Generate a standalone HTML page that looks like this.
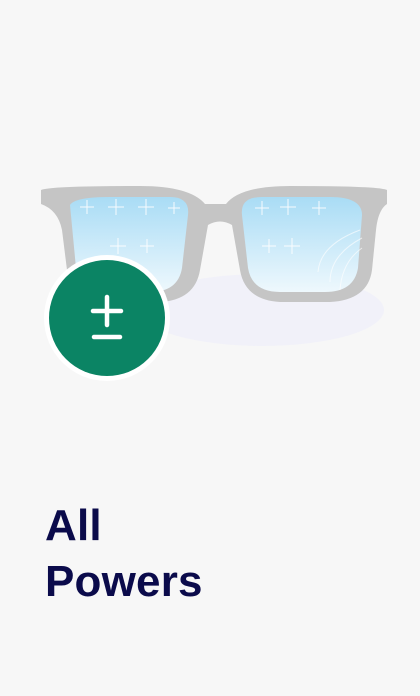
<!DOCTYPE html>
<html><head><style>
html,body{margin:0;padding:0;background:#f7f7f7;width:420px;height:696px;overflow:hidden}
.t{position:absolute;left:45px;top:498px;font:bold 44px/56px "Liberation Sans",sans-serif;color:#0b0b4b;letter-spacing:0.2px}
</style></head><body>
<svg width="420" height="696" style="position:absolute;left:0;top:0">
<defs>
<linearGradient id="lg" x1="0" y1="0" x2="0" y2="1">
<stop offset="0" stop-color="#a9dcf5"/><stop offset="1" stop-color="#eef8fd"/>
</linearGradient>
<radialGradient id="eg" cx="0.5" cy="0.5" r="0.5">
<stop offset="0" stop-color="#f0f0fa"/><stop offset="1" stop-color="#f7f7fb"/>
</radialGradient>
</defs>
<ellipse cx="262" cy="310" rx="122" ry="36" fill="#f1f1f9"/>
<path d="M41 190 Q50 186 140 186 Q190 186 205 204 L226 204 Q240 186 290 186 Q380 186 387 190 L387 204 Q378 210 376 230 L372 270 Q368 300 330 302 L280 302 Q245 300 240 270 L232 225 Q220 218 208 225 L200 270 Q195 300 160 302 L110 302 Q72 300 67 270 L62 230 Q58 210 41 204 Z" fill="#c5c5c5"/>
<path d="M70 205 Q75 197 110 197 L170 197 Q190 197 188 215 L182 268 Q178 292 150 292 L110 292 Q80 292 76 268 Z" fill="url(#lg)"/>
<path d="M242 215 Q240 197 262 197 L330 197 Q362 197 362 215 L358 268 Q354 292 325 292 L280 292 Q252 292 248 268 Z" fill="url(#lg)"/>
<g stroke="#fff" stroke-width="1" opacity="0.9">
<path d="M80 207h14M87 200v14M108 207h16M116 199v16M138 207h16M146 199v16M168 208h12M174 202v12M110 246h16M118 238v16M140 246h14M147 239v14M255 208h14M262 201v14M280 207h16M288 199v16M312 208h14M319 201v14M262 246h14M269 239v14M284 246h16M292 238v16"/>
<path d="M318 272 Q320 245 360 230M330 282 Q330 255 362 238M340 290 Q342 262 362 248" fill="none" opacity="0.7"/>
</g>
<circle cx="107" cy="318" r="63" fill="#fff"/>
<circle cx="107" cy="318" r="58" fill="#0b8464"/>
<g stroke="#fff" stroke-width="4.5" stroke-linecap="round">
<path d="M93 311h28M107 297v28M94 337h26"/>
</g>
</svg>
<div class="t">All<br>Powers</div>
</body></html>
